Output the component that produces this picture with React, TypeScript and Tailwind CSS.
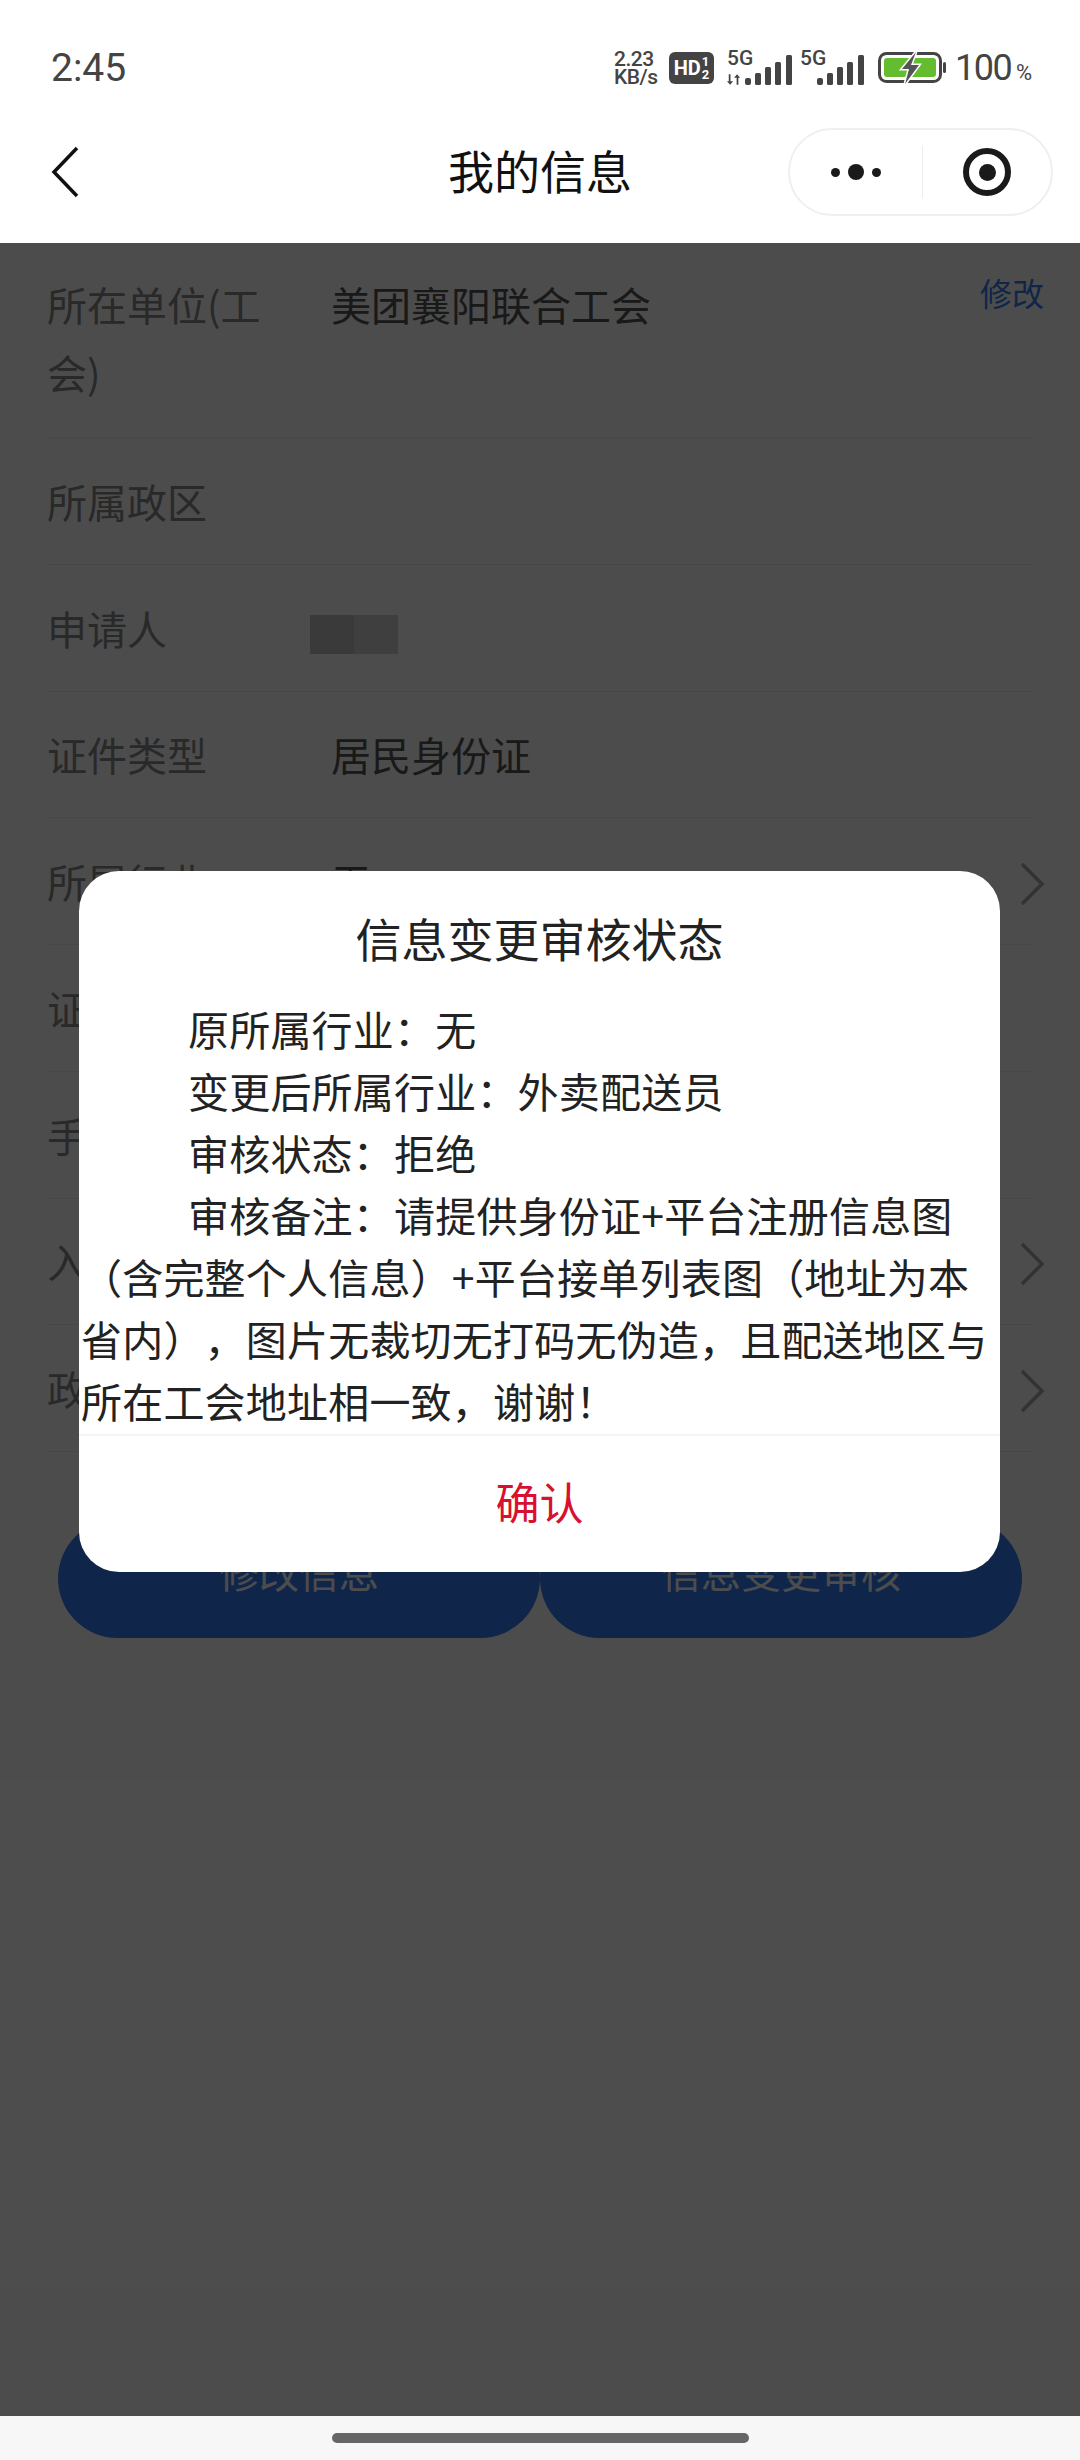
import React from 'react';

interface RowItem {
  label: string;
  value?: string;
  arrow?: boolean;
}

const rows: RowItem[] = [
  { label: '所属政区' },
  { label: '申请人' },
  { label: '证件类型', value: '居民身份证' },
  { label: '所属行业', value: '无', arrow: true },
  { label: '证件号码' },
  { label: '手机号码' },
  { label: '入会时间', arrow: true },
  { label: '政治面貌', arrow: true },
];

const SignalBars = ({ className }: { className: string }) => (
  <svg className={className} width="47" height="30" viewBox="0 0 47 30" fill="#444">
    <rect x="0" y="23" width="6" height="7" rx="2" />
    <rect x="10" y="18" width="6" height="12" rx="1.500" />
    <rect x="20" y="12" width="6" height="18" rx="1.500" />
    <rect x="30" y="7" width="6" height="23" rx="1.500" />
    <rect x="41" y="0" width="6" height="30" rx="1.500" />
  </svg>
);

const StatusBar = () => (
  <div className="h-[88px] flex items-end pl-[51px] pr-[45px] pb-[2px] text-[#444] font-['Roboto','Liberation_Sans',sans-serif]">
    <span className="text-[39px] leading-[44px] mb-[-4px]">2:45</span>
    <div className="ml-auto flex items-center h-[36px]">
      <div className="w-[46px] text-[21px] leading-[18px] font-medium tracking-tight">
        <div>2.23</div>
        <div>KB/s</div>
      </div>
      <div className="ml-[9px] w-[45px] h-[32px] rounded-[6px] bg-[#444] text-white flex items-center justify-center gap-[1px] font-bold">
        <span className="text-[20px] leading-none">HD</span>
        <span className="text-[13px] leading-[13px]">
          <span className="block">1</span>
          <span className="block">2</span>
        </span>
      </div>
      <div className="relative ml-[13px] w-[65px] h-[34px]">
        <span className="absolute left-0 top-[-3px] text-[21px] leading-[20px] font-medium">5G</span>
        <svg className="absolute left-0 bottom-0" width="14" height="11" viewBox="0 0 16 12" fill="#444">
          <path d="M4 0v8h3L3.500 12 0 8h2V0zM11 12V4H8l3.500-4L15 4h-2v8z" />
        </svg>
        <SignalBars className="absolute right-0 bottom-0" />
      </div>
      <div className="relative ml-[8px] w-[64px] h-[34px]">
        <span className="absolute left-0 top-[-3px] text-[21px] leading-[20px] font-medium">5G</span>
        <SignalBars className="absolute right-0 bottom-0" />
      </div>
      <svg className="ml-[14px]" width="68" height="34" viewBox="0 0 68 34">
        <rect x="1.500" y="2.500" width="61" height="28" rx="7" fill="none" stroke="#444" strokeWidth="3" />
        <rect x="6" y="7" width="52" height="19" rx="3" fill="#63bd2f" />
        <rect x="65" y="11" width="3" height="11" rx="1.500" fill="#444" />
        <path d="M38 1 L24 18 H31 L27 33 L41 14 H33 Z" fill="#555" stroke="#fff" strokeWidth="3" paintOrder="stroke" />
      </svg>
      <span className="ml-[9px] w-[58px] text-[36px] leading-[36px] tracking-[-1.500px]">100</span>
      <span className="ml-[3px] mt-[9px] w-[19px] text-[22px] leading-[20px]">%</span>
    </div>
  </div>
);

const NavBar = () => (
  <div className="relative h-[155px] flex items-center justify-center pt-[6px]">
    <svg className="absolute left-[50px] top-[57px]" width="30" height="54" viewBox="0 0 30 54" fill="none" stroke="#111" strokeWidth="3.500">
      <path d="M27 3 L4 27 L27 51" />
    </svg>
    <h1 className="text-[46px] leading-[60px] font-normal text-[#111]">我的信息</h1>
    <div className="absolute left-[788px] top-[40px] w-[265px] h-[88px] rounded-full border-2 border-[#efefef] flex items-center">
      <div className="w-[132px] flex items-center justify-center gap-[8px]">
        <span className="w-[9px] h-[9px] rounded-full bg-[#1a1a1a]" />
        <span className="w-[16px] h-[16px] rounded-full bg-[#1a1a1a]" />
        <span className="w-[9px] h-[9px] rounded-full bg-[#1a1a1a]" />
      </div>
      <div className="w-[1px] h-[52px] bg-[#eeeeee]" />
      <div className="flex-1 flex items-center justify-center">
        <div className="w-[48px] h-[48px] rounded-full border-[6px] border-[#1a1a1a] flex items-center justify-center">
          <span className="w-[17px] h-[17px] rounded-full bg-[#1a1a1a]" />
        </div>
      </div>
    </div>
  </div>
);

const Chevron = () => (
  <svg className="ml-auto -mr-[12px] mt-[6px]" width="26" height="46" viewBox="0 0 26 46" fill="none" stroke="#aaa" strokeWidth="3.500">
    <path d="M3 3 L23 23 L3 43" />
  </svg>
);

const Row = ({ label, value, arrow }: RowItem) => (
  <div className="h-[126.750px] flex items-center border-b border-[#eeeeee]">
    <span className="w-[284px] shrink-0 text-[#8a8a8a]">{label}</span>
    {value && <span className="text-[#555]">{value}</span>}
    {label === '申请人' && (
      <div className="-ml-[21px] mt-[13px] flex h-[39px]">
        <span className="w-[44px] bg-[#c2c2c2]" />
        <span className="w-[44px] bg-[#d2d2d2]" />
      </div>
    )}
    {arrow && <Chevron />}
  </div>
);

const Dialog = () => (
  <div className="w-[921px] h-[701px] bg-white rounded-[40px] flex flex-col text-[#222]">
    <h2 className="pt-[33px] text-center text-[46px] leading-[66px] font-normal">信息变更审核状态</h2>
    <div className="mt-[27px] mb-[3px] px-[2px] text-[41px] leading-[62px] tracking-[0.2px] [text-spacing-trim:space-all]">
      <p className="indent-[107px]">原所属行业：无</p>
      <p className="indent-[107px]">变更后所属行业：外卖配送员</p>
      <p className="indent-[107px]">审核状态：拒绝</p>
      <p className="indent-[107px]">审核备注：请提供身份证+平台注册信息图（含完整个人信息）+平台接单列表图（地址为本省内），图片无裁切无打码无伪造，且配送地区与所在工会地址相一致，谢谢！</p>
    </div>
    <button className="flex-1 pb-[6px] border-t-2 border-[#f4f4f4] text-[44px] text-[#d9102f]">确认</button>
  </div>
);

export default function App() {
  return (
    <div className="w-[1080px] h-[2460px] flex flex-col bg-white overflow-hidden font-['Noto_Sans_CJK_SC','Liberation_Sans',sans-serif]">
      <StatusBar />
      <NavBar />

      <main className="relative flex-1 bg-white text-[40px] leading-[68px]">
        <div className="px-[47px]">
          {/* first row wraps on two lines */}
          <div className="relative h-[195px] flex pt-[27px] border-b border-[#eeeeee]">
            <span className="w-[284px] shrink-0 pr-[40px] text-[#8a8a8a]">所在单位(工会)</span>
            <span className="text-[#555]">美团襄阳联合工会</span>
            <span className="absolute -right-[11px] top-[23px] text-[32px] leading-[52px] text-[#357ff7]">修改</span>
          </div>
          {rows.map((row) => (
            <Row key={row.label} {...row} />
          ))}
        </div>

        <div className="flex px-[58px] mt-[67px]">
          <button className="flex-1 h-[119px] pb-[16px] rounded-[60px] bg-[#357ff7] text-white">修改信息</button>
          <button className="flex-1 h-[119px] pb-[16px] rounded-[60px] bg-[#357ff7] text-white">信息变更审核</button>
        </div>

        {/* mask + dialog */}
        <div className="absolute inset-0 bg-black/70 flex justify-center pt-[628px] pr-[1px]">
          <Dialog />
        </div>
      </main>

      <div className="h-[44px] bg-[#f7f7f7] flex justify-center pt-[17px]">
        <div className="w-[417px] h-[10px] rounded-full bg-[#666]" />
      </div>
    </div>
  );
}
